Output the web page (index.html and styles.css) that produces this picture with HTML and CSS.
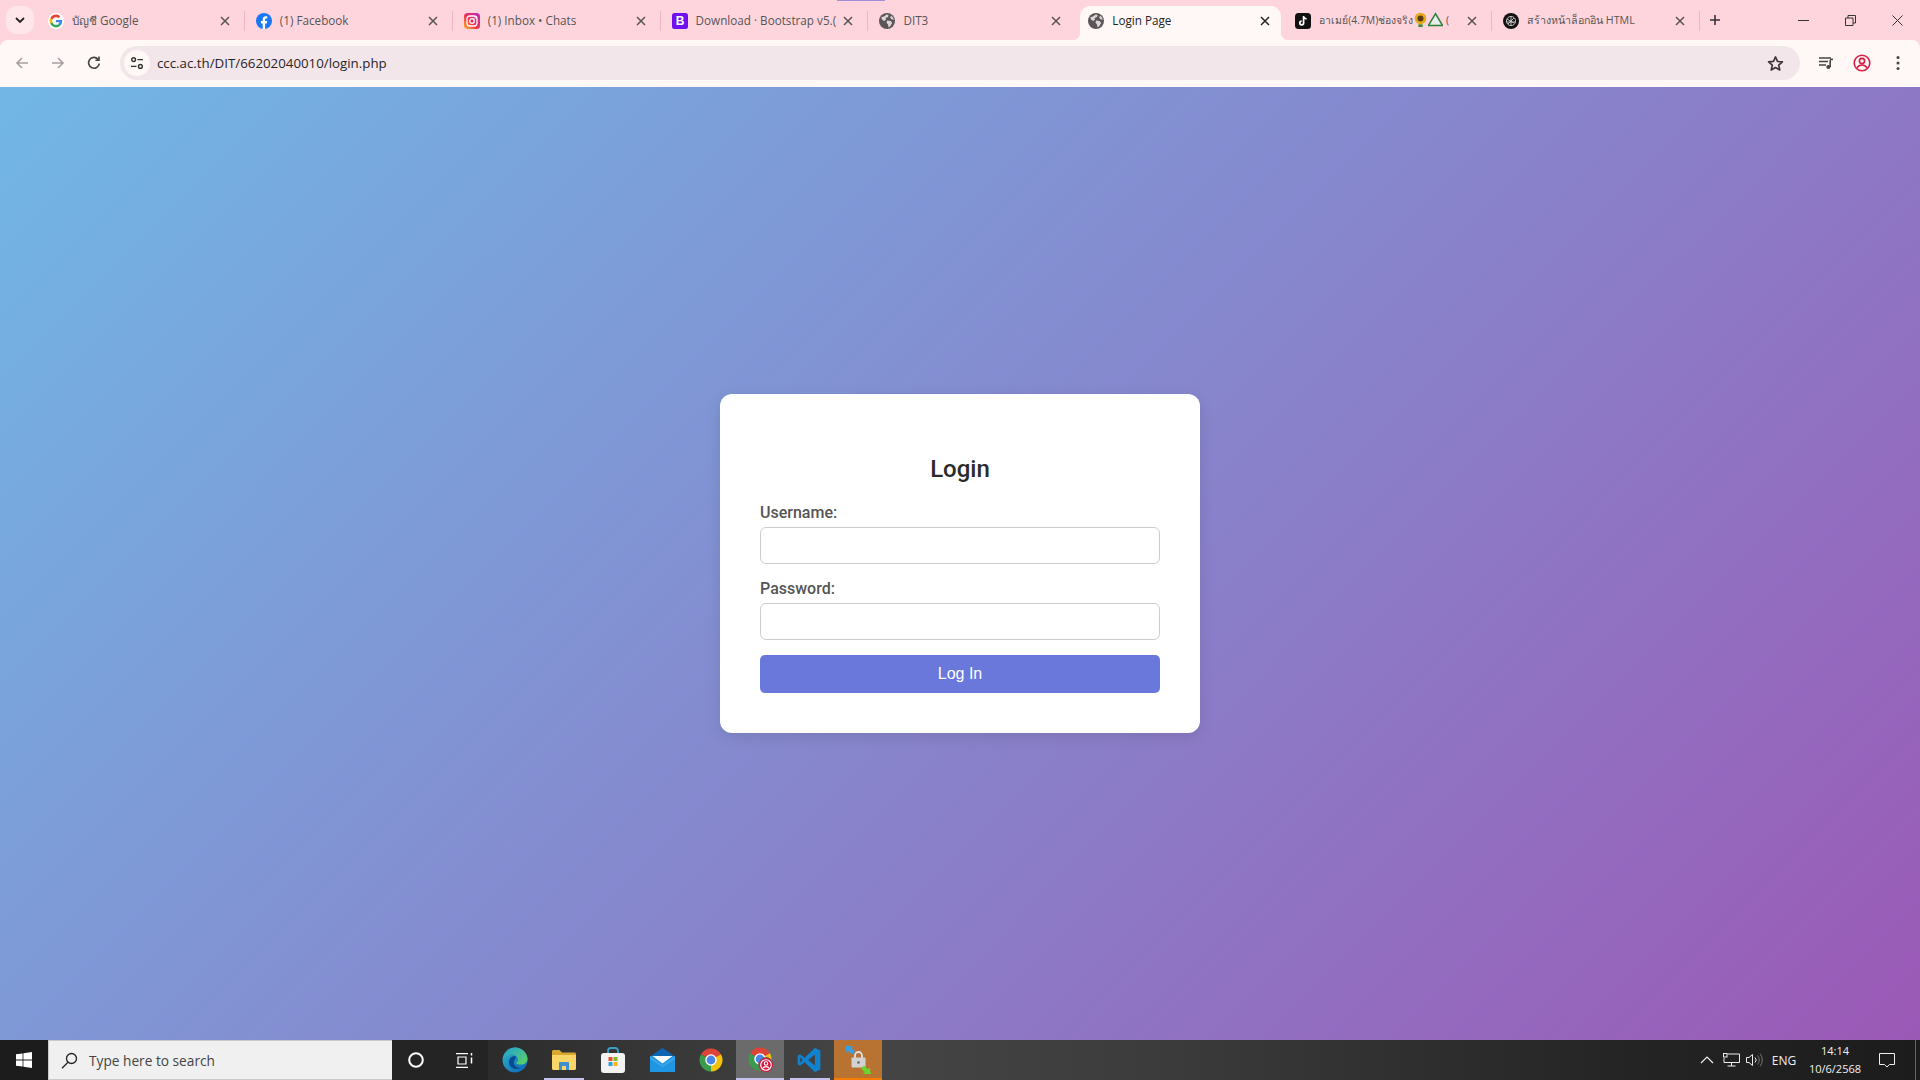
FILE: index.html
```html
<!DOCTYPE html>
<html lang="en">
<head>
<meta charset="utf-8">
<title>Login Page</title>
<link rel="stylesheet" href="styles.css">
</head>
<body>
<svg class="defs" width="0" height="0" aria-hidden="true">
  <defs>
    <symbol id="x" viewBox="0 0 10 10"><path d="M1 1l8 8M9 1l-8 8" fill="none" stroke="currentColor" stroke-width="1.5"/></symbol>
    <symbol id="globe" viewBox="0 0 16 16"><circle cx="8" cy="8" r="8" fill="#5b5557"/><path d="M2.2 4.2 5 3.4l2.6-2 2 .6-.6 2-2.4.9.4 1.6L5.4 8l-2-.9zM8.2 7.6l3.6.4 1.4 2-2 3.2-1.6 1.2-.6-3-1.6-1.8zM12 2.6l2.2 2.2.6 2-2.2-.6-1.4-1.8z" fill="#dcd6d8"/></symbol>
    <symbol id="chrome" viewBox="0 0 48 48">
      <path d="M24 24 4.08 12.5A23 23 0 0 1 43.92 12.5z" fill="#dc4437"/>
      <path d="M24 24 43.92 12.5A23 23 0 0 1 24 47z" fill="#f4c20d"/>
      <path d="M24 24 24 47A23 23 0 0 1 4.08 12.5z" fill="#3a9b4a"/>
      <circle cx="24" cy="24" r="11.5" fill="#fff"/><circle cx="24" cy="24" r="8.8" fill="#4a86e8"/>
    </symbol>
  </defs>
</svg>
<div class="tabstrip">
  <div class="tab-list-btn"><svg width="10" height="7" viewBox="0 0 10 7"><path d="M1 1l4 4 4-4" fill="none" stroke="#222" stroke-width="1.8"/></svg></div>
  <div class="tabs">
    <div class="tab sep">
      <svg class="fav" viewBox="-6 -6 60 60"><circle cx="24" cy="24" r="30" fill="#fff"/><path fill="#EA4335" d="M24 9.5c3.54 0 6.71 1.22 9.21 3.6l6.85-6.85C35.9 2.38 30.47 0 24 0 14.62 0 6.51 5.38 2.56 13.22l7.98 6.19C12.43 13.72 17.74 9.5 24 9.5z"/><path fill="#4285F4" d="M46.98 24.55c0-1.57-.15-3.09-.38-4.55H24v9.02h12.94c-.58 2.96-2.26 5.48-4.78 7.18l7.73 6c4.51-4.18 7.09-10.36 7.09-17.65z"/><path fill="#FBBC05" d="M10.53 28.59c-.48-1.45-.76-2.99-.76-4.59s.27-3.14.76-4.59l-7.98-6.19C.92 16.46 0 20.12 0 24c0 3.88.92 7.54 2.56 10.78l7.97-6.19z"/><path fill="#34A853" d="M24 48c6.48 0 11.93-2.13 15.89-5.81l-7.73-6c-2.15 1.45-4.92 2.3-8.16 2.3-6.26 0-11.57-4.22-13.47-9.91l-7.98 6.19C6.51 42.62 14.62 48 24 48z"/></svg>
      <span class="tab-title">บัญชี Google</span>
      <svg class="close"><use href="#x"/></svg>
    </div>
    <div class="tab sep">
      <svg class="fav" viewBox="0 0 16 16"><circle cx="8" cy="8" r="8" fill="#1877f2"/><path d="M6.7 16V10.4H4.9V8h1.8V6.3c0-2 1.2-3 3-3 .8 0 1.6.1 1.6.1v2h-1c-1 0-1.2.6-1.2 1.2V8h2.1l-.4 2.4H9.1V16z" fill="#fff"/></svg>
      <span class="tab-title">(1) Facebook</span>
      <svg class="close"><use href="#x"/></svg>
    </div>
    <div class="tab sep">
      <svg class="fav" viewBox="0 0 16 16"><defs><linearGradient id="ig" x1="0" y1="1" x2="1" y2="0"><stop offset="0" stop-color="#fdb92d"/><stop offset=".45" stop-color="#f0304f"/><stop offset="1" stop-color="#b52cc8"/></linearGradient></defs><rect width="16" height="16" rx="3.5" fill="url(#ig)"/><rect x="3" y="3" width="10" height="10" rx="3" fill="none" stroke="#fff" stroke-width="1.3"/><circle cx="8" cy="8" r="2.3" fill="none" stroke="#fff" stroke-width="1.3"/><circle cx="11" cy="5" r=".7" fill="#fff"/></svg>
      <span class="tab-title">(1) Inbox • Chats</span>
      <svg class="close"><use href="#x"/></svg>
    </div>
    <div class="tab sep tab-loading">
      <svg class="fav" viewBox="0 0 16 16"><rect width="16" height="16" rx="2.5" fill="#7010f0"/><text x="8" y="12.4" class="fav-letter">B</text></svg>
      <span class="tab-title">Download · Bootstrap v5.(</span>
      <svg class="close"><use href="#x"/></svg>
    </div>
    <div class="tab">
      <svg class="fav"><use href="#globe"/></svg>
      <span class="tab-title">DIT3</span>
      <svg class="close"><use href="#x"/></svg>
    </div>
    <div class="tab tab-active">
      <svg class="fav"><use href="#globe"/></svg>
      <span class="tab-title">Login Page</span>
      <svg class="close"><use href="#x"/></svg>
    </div>
    <div class="tab sep">
      <svg class="fav" viewBox="0 0 16 16"><rect width="16" height="16" rx="3.5" fill="#111"/><path d="M8.6 3v7a1.9 1.9 0 1 1-1.9-1.9M8.6 3c.2 1.7 1.3 2.8 3 3" fill="none" stroke="#fff" stroke-width="1.7"/></svg>
      <span class="tab-title tab-title-sm">อาเมย์(4.7M)ช่องจริง<svg class="emoji" viewBox="0 0 14 14"><circle cx="7" cy="6" r="5.4" fill="#e8a91c"/><circle cx="7" cy="6" r="2.8" fill="#5a3a14"/><path d="M5 11.5h4V14H5z" fill="#3f8a2c"/></svg><svg class="emoji" viewBox="0 0 14 14"><path d="M7 1.5 13.5 12.5H.5z" fill="#e6efe9" stroke="#2f7d3a" stroke-width="1.4"/></svg> (</span>
      <svg class="close"><use href="#x"/></svg>
    </div>
    <div class="tab sep">
      <svg class="fav" viewBox="0 0 16 16"><circle cx="8" cy="8" r="8" fill="#111"/><g fill="none" stroke="#cfcfcf" stroke-width=".9"><circle cx="8" cy="8" r="4.6"/><path d="M4 6l7 4M5 11l6-6M8 3.4v9.2M3.6 9h8.8"/></g></svg>
      <span class="tab-title tab-title-th">สร้างหน้าล็อกอิน HTML</span>
      <svg class="close"><use href="#x"/></svg>
    </div>
  </div>
  <div class="new-tab"><svg width="12" height="12" viewBox="0 0 12 12"><path d="M6 1v10M1 6h10" stroke="#333" stroke-width="1.6"/></svg></div>
  <div class="win-controls">
    <div class="win-btn"><svg width="11" height="11" viewBox="0 0 11 11"><path d="M0 5.500h11" stroke="#333"/></svg></div>
    <div class="win-btn"><svg width="11" height="11" viewBox="0 0 11 11"><path d="M.5 3h7.500v7.500H.5zM3 3V.5h7.500V8H8" fill="none" stroke="#333"/></svg></div>
    <div class="win-btn"><svg width="11" height="11" viewBox="0 0 11 11"><path d="M.5.500l10 10M10.500.500l-10 10" stroke="#333"/></svg></div>
  </div>
</div>
<div class="toolbar">
  <div class="tool-btn"><svg width="16" height="16" viewBox="0 0 16 16"><path d="M14 8H3M8 3 3 8l5 5" fill="none" stroke="#a89fa2" stroke-width="1.6"/></svg></div>
  <div class="tool-btn"><svg width="16" height="16" viewBox="0 0 16 16"><path d="M2 8h11M8 3l5 5-5 5" fill="none" stroke="#a89fa2" stroke-width="1.6"/></svg></div>
  <div class="tool-btn"><svg width="16" height="16" viewBox="0 0 16 16"><path d="M13.300 8.600A5.400 5.400 0 1 1 12 4.200M13 1.600v3.600H9.400" fill="none" stroke="#444" stroke-width="1.6"/></svg></div>
  <div class="omnibox">
    <div class="site-info"><svg width="14" height="14" viewBox="0 0 14 14"><g fill="none" stroke="#333" stroke-width="1.4"><circle cx="3.600" cy="3.600" r="1.900"/><path d="M7.500 3.600H13M1 10.400h5.500"/><circle cx="10.400" cy="10.400" r="1.900"/></g></svg></div>
    <span class="url">ccc.ac.th/DIT/66202040010/login.php</span>
    <svg class="star" width="17" height="17" viewBox="0 0 17 17"><path d="M8.500 1.900l2 4.500 4.900.5-3.700 3.300 1.100 4.800-4.300-2.500-4.300 2.500 1.100-4.800L1.600 6.900l4.900-.5z" fill="none" stroke="#3b3436" stroke-width="1.6" stroke-linejoin="round"/></svg>
  </div>
  <div class="tool-btn"><svg width="16" height="14" viewBox="0 0 16 14"><path d="M1 2h12M1 5.500h9M1 9h7" stroke="#444" stroke-width="1.4"/><path d="M12.200 4v7" stroke="#444" stroke-width="1.6"/><path d="M12 3.400h3" stroke="#444" stroke-width="1.6"/><circle cx="10.400" cy="11" r="2.100" fill="#444"/></svg></div>
  <div class="tool-btn"><svg width="18" height="18" viewBox="0 0 18 18"><g fill="none" stroke="#d61f45" stroke-width="1.6"><circle cx="9" cy="9" r="7.800"/><circle cx="9" cy="7" r="2.600"/><path d="M3.800 14c1.500-2.400 3.400-3 5.200-3s3.700.6 5.200 3"/></g></svg></div>
  <div class="tool-btn"><svg width="4" height="16" viewBox="0 0 4 16"><circle cx="2" cy="2.500" r="1.500" fill="#444"/><circle cx="2" cy="8" r="1.500" fill="#444"/><circle cx="2" cy="13.500" r="1.500" fill="#444"/></svg></div>
</div>
<main class="page">
  <form class="card">
    <h2 class="card-title">Login</h2>
    <label class="field-label" for="username">Username:</label>
    <input class="field-input" id="username" type="text">
    <label class="field-label" for="password">Password:</label>
    <input class="field-input" id="password" type="password">
    <button class="submit" type="button">Log In</button>
  </form>
</main>
<footer class="taskbar">
  <div class="start"><svg width="16" height="16" viewBox="0 0 16 16"><path d="M0 2.300 6.600 1.400V7.600H0zM7.400 1.300 16 0V7.600H7.400zM0 8.400H6.600V14.600L0 13.700zM7.400 8.400H16V16L7.400 14.700z" fill="#fff"/></svg></div>
  <div class="search">
    <svg width="17" height="17" viewBox="0 0 17 17"><circle cx="10.500" cy="6.500" r="5" fill="none" stroke="#222" stroke-width="1.300"/><path d="M7 10.200 1 16.200" stroke="#222" stroke-width="1.300"/></svg>
    <span class="search-text">Type here to search</span>
  </div>
  <div class="sys-cell"><svg width="18" height="18" viewBox="0 0 18 18"><circle cx="9" cy="9" r="6.800" fill="none" stroke="#fff" stroke-width="2"/></svg></div>
  <div class="sys-cell"><svg width="17" height="15" viewBox="0 0 17 15"><path d="M0 .7h12M0 14.300h12M2 4h8v7H2z" fill="none" stroke="#fff" stroke-width="1.200"/><path d="M15.500 0v2.500M15.500 4.500v6" stroke="#fff" stroke-width="1.500"/></svg></div>
  <div class="app app-first">
    <svg width="26" height="26" viewBox="0 0 26 26"><defs><linearGradient id="edgeA" x1="0" y1="0" x2="1" y2="1"><stop offset="0" stop-color="#2fb6c8"/><stop offset="1" stop-color="#0b62b8"/></linearGradient><linearGradient id="edgeB" x1="0" y1="0" x2="1" y2="1"><stop offset="0" stop-color="#1f9fd8"/><stop offset="1" stop-color="#5fd65a"/></linearGradient></defs><circle cx="13" cy="13" r="12.500" fill="url(#edgeA)"/><path d="M1.500 11C3 4.500 8 .5 13 .5c7 0 12.500 5.500 12.500 11.500 0 3.500-3 5.500-6.500 5.500-2.500 0-4.500-.8-5-1.800 2-.8 2.500-2.500 2-4C15.500 8.800 12.500 7 9 7.500 5.500 8 2.500 9.500 1.500 11z" fill="url(#edgeB)"/><path d="M13 9c-3.500 0-6 2.800-6 6 0 4.500 3.500 7 7.500 7 2 0 4-.6 5.500-1.500-2 .8-4.500.3-6.500-1.500-2-1.800-2.300-4.800-.5-6.500.6-.6.900-1.600.9-2.500z" fill="#0a4a94"/></svg>
  </div>
  <div class="app app-running">
    <svg width="24" height="20" viewBox="0 0 24 20"><path d="M0 1.500C0 .7.700 0 1.500 0h6l2.500 2.500h12.500c.8 0 1.500.7 1.500 1.500v3H0z" fill="#d9a82e"/><path d="M0 5h24v13.500c0 .8-.7 1.500-1.500 1.500h-21C.7 20 0 19.300 0 18.500z" fill="#fbd568"/><path d="M7 20v-7c0-.6.400-1 1-1h8c.6 0 1 .4 1 1v7h-3v-4h-4v4z" fill="#3d8fd0"/></svg>
  </div>
  <div class="app">
    <svg width="24" height="26" viewBox="0 0 24 26"><path d="M7 7V4a3 3 0 0 1 3-3h4a3 3 0 0 1 3 3v3" fill="none" stroke="#3aa0c8" stroke-width="1.800"/><rect y="6" width="24" height="20" rx="3" fill="#f5f3f1"/><rect x="7.500" y="10" width="4" height="4" fill="#e8512a"/><rect x="12.500" y="10" width="4" height="4" fill="#7fba2a"/><rect x="7.500" y="15" width="4" height="4" fill="#2f9fe0"/><rect x="12.500" y="15" width="4" height="4" fill="#fcb514"/></svg>
  </div>
  <div class="app">
    <svg width="25" height="24" viewBox="0 0 25 24"><path d="M12.500 0 25 8.500H0z" fill="#0a64b4"/><rect y="8" width="25" height="16" fill="#1e96e4"/><path d="M2.500 8h20l-10 7.500z" fill="#f4f9fd"/><path d="M0 8.500 12.500 17 25 8.500V11l-12.500 8L0 11z" fill="#58b4ee" opacity=".55"/></svg>
  </div>
  <div class="app">
    <svg width="24" height="24"><use href="#chrome"/></svg>
  </div>
  <div class="app app-active app-running">
    <svg class="profile-chrome" width="26" height="26" viewBox="0 0 26 26"><use href="#chrome" width="24" height="24"/><circle cx="18" cy="18" r="7.500" fill="#d8193f" stroke="#6a6a6a"/><g fill="none" stroke="#fff" stroke-width="1.100"><circle cx="18" cy="18" r="5.300"/><circle cx="18" cy="16.500" r="1.700"/><path d="M14.500 21.500c1-1.500 2.200-1.900 3.500-1.900s2.500.4 3.500 1.900"/></g></svg>
  </div>
  <div class="app app-vs app-running">
    <svg width="26" height="26" viewBox="0 0 24 24"><path fill-rule="evenodd" d="M17.500 1 7.900 10 3.700 6.800 1.500 8v8l2.200 1.200L7.900 14l9.600 9 5-2.300V3.300zM17.500 7v10l-6.300-5zM3.900 9.500 6.200 12l-2.300 2.500z" fill="#0f83d0"/></svg>
  </div>
  <div class="app app-vpn">
    <svg width="26" height="28" viewBox="0 0 26 28"><path d="M0 0h8L6.200 1.800 10 5.600 7 8.600 3.200 4.800 1.500 6.500z" fill="#35a0e6"/><path d="M10 12V9.500a3.500 3.500 0 0 1 7 0V12" fill="none" stroke="#e4e4e4" stroke-width="1.800"/><rect x="6.500" y="11.500" width="14" height="10" rx="1" fill="#d2d2d2"/><circle cx="13.500" cy="16.500" r="1.300" fill="#666"/><path d="M26 28h-8l1.800-1.800-3.800-3.800 3-3 3.800 3.800 1.700-1.700z" fill="#6ad52e"/></svg>
  </div>
  <div class="tray">
    <div class="tray-cell"><svg width="14" height="8" viewBox="0 0 14 8"><path d="M1 7l6-6 6 6" fill="none" stroke="#eee" stroke-width="1.200"/></svg></div>
    <div class="tray-cell"><svg width="17" height="14" viewBox="0 0 17 14"><path d="M4.500 1H16.500V9.500H1V5M8.500 9.500V13M4.500 13h8" fill="none" stroke="#eee"/><rect x=".5" y=".5" width="3.500" height="3.500" fill="none" stroke="#eee"/></svg></div>
    <div class="tray-cell"><svg width="18" height="14" viewBox="0 0 18 14"><path d="M.5 4.500h2.500L6.500 1.500v11L3 9.500H.5z" fill="none" stroke="#eee"/><path d="M9 4.500a3.500 3.500 0 0 1 0 5" fill="none" stroke="#eee"/><path d="M11.500 2.500a6.500 6.500 0 0 1 0 9M14 .8a9.500 9.500 0 0 1 0 12.400" fill="none" stroke="#777"/></svg></div>
    <div class="tray-lang">ENG</div>
    <div class="clock"><span>14:14</span><span>10/6/2568</span></div>
    <div class="notify"><svg width="16" height="15" viewBox="0 0 16 15"><path d="M.5.500h15v11h-5l-2.500 2.500-2.500-2.500h-5z" fill="none" stroke="#eee"/></svg></div>
    <div class="show-desktop"></div>
  </div>
</footer>
</body>
</html>
```
FILE: styles.css
```css
* { box-sizing: border-box; }
html, body { margin: 0; height: 100%; }
body {
  display: flex;
  flex-direction: column;
  height: 100vh;
  overflow: hidden;
  font-family: "Open Sans", "Noto Sans", "DejaVu Sans", sans-serif;
  background: #ffd5dd;
}
.defs { position: absolute; }

/* tab strip */
.tabstrip {
  flex: 0 0 40px;
  display: flex;
  align-items: flex-start;
  padding-left: 6px;
  background: #ffd5dd;
}
.tab-list-btn {
  flex: 0 0 28px;
  height: 28px;
  margin: 6px 2px 0 0;
  border-radius: 10px;
  background: #ffe6ea;
  display: flex;
  align-items: center;
  justify-content: center;
}
.tabs { display: flex; height: 40px; padding-top: 6px; }
.tab {
  position: relative;
  flex: 0 0 207.86px;
  width: 207.86px;
  height: 34px;
  display: flex;
  align-items: center;
  padding: 0 14px 4px 12px;
  color: #555;
  font-size: 11.7px;
}
.tab.sep::after {
  content: "";
  position: absolute;
  right: -1px;
  top: 5px;
  width: 1px;
  height: 20px;
  background: #efb4c0;
}
.tab-loading::before {
  content: "";
  position: absolute;
  right: -18px;
  top: -6px;
  width: 48px;
  height: 1px;
  background: #9c8fd6;
}
.tab-active {
  flex: 0 0 200.86px;
  width: 200.86px;
  margin: 0 2px 0 5px;
  padding: 0 11px 4px 8px;
  color: #222;
  background: #fff8f6;
  border-radius: 10px 10px 0 0;
}
.tab-active::before, .tab-active::after {
  content: "";
  position: absolute;
  bottom: 0;
  width: 8px;
  height: 8px;
}
.tab-active::before { left: -8px; background: radial-gradient(circle at 0 0, transparent 8px, #fff8f6 8.5px); }
.tab-active::after { right: -8px; background: radial-gradient(circle at 100% 0, transparent 8px, #fff8f6 8.5px); }
.fav { flex: 0 0 16px; width: 16px; height: 16px; margin-right: 8px; }
.fav-letter {
  font-family: "Liberation Sans", sans-serif;
  font-weight: 700;
  font-size: 12px;
  fill: #fff;
  text-anchor: middle;
}
.tab-title {
  flex: 1;
  min-width: 0;
  height: 16px;
  margin-bottom: 2px;
  overflow: hidden;
  white-space: nowrap;
  line-height: 16px;
}
.tab-title-sm { font-size: 10.4px; }
.tab-title-th { font-size: 10.7px; }
.emoji { width: 15px; height: 15px; vertical-align: -3px; }
.close { flex: 0 0 10px; width: 10px; height: 10px; margin-left: 6px; }
.new-tab {
  flex: 0 0 32px;
  height: 40px;
  display: flex;
  align-items: center;
  justify-content: center;
}
.win-controls { margin-left: auto; margin-right: -1px; display: flex; }
.win-btn {
  flex: 0 0 47px;
  height: 40px;
  display: flex;
  align-items: center;
  justify-content: center;
}

/* toolbar */
.toolbar {
  flex: 0 0 47px;
  display: flex;
  align-items: flex-start;
  padding: 6px 4px 0;
  background: #fff8f6;
  border-radius: 8px 8px 0 0;
}
.tool-btn {
  flex: 0 0 36px;
  height: 34px;
  display: flex;
  align-items: center;
  justify-content: center;
}
.omnibox {
  flex: 1;
  height: 34px;
  margin: 0 8px;
  padding: 0 16px 0 4px;
  display: flex;
  align-items: center;
  border-radius: 17px;
  background: #f2e6ea;
}
.site-info {
  flex: 0 0 26px;
  height: 26px;
  margin-right: 7px;
  border-radius: 50%;
  background: #fff8f6;
  display: flex;
  align-items: center;
  justify-content: center;
}
.url { flex: 1; font-size: 13.3px; color: #2a2426; padding-bottom: 1px; }
.star { flex: 0 0 17px; }

/* page */
.page {
  flex: 1;
  display: flex;
  align-items: center;
  justify-content: center;
  background: linear-gradient(135deg, #71b7e6, #9b59b6);
}
.card {
  width: 480px;
  padding: 40px;
  display: flex;
  flex-direction: column;
  background: #fff;
  border-radius: 12px;
  box-shadow: 0 4px 15px rgba(0, 0, 0, 0.1);
  font-family: Roboto, "Liberation Sans", sans-serif;
}
.card-title {
  margin: 21px 0 20px;
  font-size: 24px;
  line-height: 28px;
  font-weight: 500;
  text-align: center;
  color: #2b2b2b;
}
.field-label {
  font-size: 16px;
  line-height: 19px;
  font-weight: 500;
  color: #555;
  margin-bottom: 5px;
}
.field-input {
  height: 37px;
  margin-bottom: 15px;
  padding: 8px;
  border: 1px solid #ccc;
  border-radius: 6px;
  background: #fff;
  outline: none;
}
.submit {
  height: 38px;
  padding: 0;
  border: 0;
  border-radius: 5px;
  background: #6a78dc;
  color: #fff;
  font-family: "Liberation Sans", sans-serif;
  font-size: 16px;
}

/* taskbar */
.taskbar {
  flex: 0 0 40px;
  display: flex;
  align-items: stretch;
  background: linear-gradient(90deg, #1d1d1d 0, #2b2b2b 25%, #454545 45%, #3c3c3c 60%, #242424 85%, #1c1c1c 100%);
}
.start {
  flex: 0 0 48px;
  display: flex;
  align-items: center;
  justify-content: center;
  background: #1c1c1c;
}
.search {
  flex: 0 0 344px;
  display: flex;
  align-items: center;
  padding-left: 12px;
  background: #f0f0f0;
  border: 1px solid #c9c9c9;
  border-right: 0;
}
.search-text { margin-left: 11px; font-size: 13.7px; color: #444; }
.sys-cell {
  flex: 0 0 48px;
  display: flex;
  align-items: center;
  justify-content: center;
  background: #242424;
}
.app {
  position: relative;
  flex: 0 0 49.2px;
  display: flex;
  align-items: center;
  justify-content: center;
}
.app-first { margin-left: 2px; }
.app-running::after {
  content: "";
  position: absolute;
  left: 5px;
  right: 4px;
  bottom: 0;
  height: 2px;
  background: #c6c2f0;
}
.app-active { flex-basis: 48px; background: #6b6b6b; margin-right: 1px; }
.app-active::after { left: 0; right: 0; }
.app-vs { flex-basis: 49px; }
.app-vpn { flex-basis: 48px; background: #b87333; box-shadow: inset 0 -2px 0 #f57c00; }
.profile-chrome { margin-left: 2px; }
.tray {
  margin-left: auto;
  display: flex;
  align-items: stretch;
  color: #f0f0f0;
  font-size: 12px;
}
.tray-cell {
  flex: 0 0 24px;
  display: flex;
  align-items: center;
  justify-content: center;
}
.tray-lang {
  flex: 0 0 34px;
  display: flex;
  align-items: center;
  justify-content: center;
}
.clock {
  flex: 0 0 68px;
  display: flex;
  flex-direction: column;
  align-items: center;
  justify-content: center;
  font-size: 11px;
  line-height: 18px;
}
.notify {
  flex: 0 0 36px;
  display: flex;
  align-items: center;
  justify-content: center;
}
.show-desktop {
  flex: 0 0 15px;
  background: linear-gradient(90deg, transparent 10px, #666 10px, #666 11px, transparent 11px);
}
```
